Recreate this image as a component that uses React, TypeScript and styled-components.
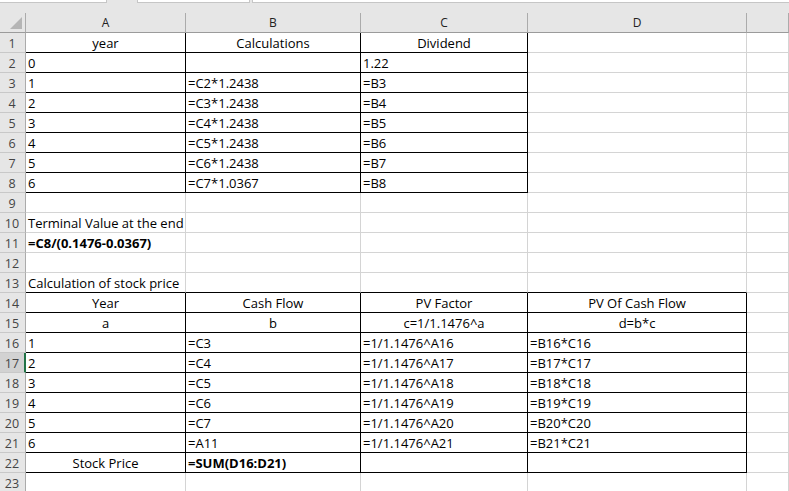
import React from "react";
import styled, { createGlobalStyle } from "styled-components";

const GlobalStyle = createGlobalStyle`
  html, body {
    margin: 0;
    padding: 0;
    background: #ffffff;
    overflow: hidden;
  }
  body {
    font-family: "Open Sans", "Liberation Sans", Arial, sans-serif;
  }
`;

const Window = styled.div`
  width: 789px;
  height: 491px;
  overflow: hidden;
  background: #e6e6e6;
`;

const TopStrip = styled.div`
  display: flex;
  align-items: flex-start;
  height: 13px;
`;

const FormulaBox = styled.div<{ $w?: number }>`
  height: 2px;
  background: #ffffff;
  border: 1px solid #c6c6c6;
  border-top: none;
  ${(p) => (p.$w ? `width: ${p.$w}px;` : "flex: 1;")}
  margin-right: 30px;
  &:first-child {
    border-left: none;
  }
  &:nth-child(2) {
    margin-right: 2px;
  }
  &:last-child {
    margin-right: 0;
    border-right: none;
  }
`;

const Sheet = styled.div`
  display: grid;
  grid-template-columns: 26px 160px 175px 167px 219px 1fr;
  grid-auto-rows: 20px;
`;

const Corner = styled.div`
  position: relative;
  background: #e6e6e6;
  border-right: 1px solid #ababab;
  border-bottom: 1px solid #9b9b9b;
  &::after {
    content: "";
    position: absolute;
    left: 10px;
    top: 4px;
    width: 0;
    height: 0;
    border-left: 12px solid transparent;
    border-bottom: 12px solid #b5b5b5;
  }
`;

const ColHead = styled.div`
  background: #e6e6e6;
  border-right: 1px solid #ababab;
  border-bottom: 1px solid #9b9b9b;
  font-size: 12px;
  line-height: 19px;
  color: #222;
  text-align: center;
`;

const RowHead = styled.div<{ $selected?: boolean }>`
  display: flex;
  align-items: flex-end;
  justify-content: center;
  background: ${(p) => (p.$selected ? "#d2d2d2" : "#e6e6e6")};
  border-right: ${(p) => (p.$selected ? "2px solid #217346" : "1px solid #ababab")};
  border-bottom: 1px solid #c8c8c8;
  font-size: 12.5px;
  line-height: 16px;
  color: #444;
  padding-right: ${(p) => (p.$selected ? "0" : "1px")};
`;

const Cell = styled.div<{
  $center?: boolean;
  $bold?: boolean;
  $right?: boolean;
  $bottom?: boolean;
}>`
  display: flex;
  align-items: flex-end;
  justify-content: ${(p) => (p.$center ? "center" : "flex-start")};
  background: #ffffff;
  border-right: 1px solid ${(p) => (p.$right ? "#000000" : "#d4d4d4")};
  border-bottom: 1px solid ${(p) => (p.$bottom ? "#000000" : "#d4d4d4")};
  padding: 0 2px 1px;
  font-size: 13px;
  line-height: 16px;
  font-weight: ${(p) => (p.$bold ? 700 : 400)};
  color: #000;
  white-space: nowrap;
  overflow: hidden;
`;

type CellDef = { t?: string; c?: boolean; b?: boolean };

const L = (t: string): CellDef => ({ t });
const C = (t: string): CellDef => ({ t, c: true });
const B = (t: string): CellDef => ({ t, b: true });
const E: CellDef = {};

const rows: CellDef[][] = [
  [C("year"), C("Calculations"), C("Dividend"), E],
  [L("0"), E, L("1.22"), E],
  [L("1"), L("=C2*1.2438"), L("=B3"), E],
  [L("2"), L("=C3*1.2438"), L("=B4"), E],
  [L("3"), L("=C4*1.2438"), L("=B5"), E],
  [L("4"), L("=C5*1.2438"), L("=B6"), E],
  [L("5"), L("=C6*1.2438"), L("=B7"), E],
  [L("6"), L("=C7*1.0367"), L("=B8"), E],
  [E, E, E, E],
  [L("Terminal Value at the end of year 6"), E, E, E],
  [B("=C8/(0.1476-0.0367)"), E, E, E],
  [E, E, E, E],
  [L("Calculation of stock price"), E, E, E],
  [C("Year"), C("Cash Flow"), C("PV Factor"), C("PV Of Cash Flow")],
  [C("a"), C("b"), C("c=1/1.1476^a"), C("d=b*c")],
  [L("1"), L("=C3"), L("=1/1.1476^A16"), L("=B16*C16")],
  [L("2"), L("=C4"), L("=1/1.1476^A17"), L("=B17*C17")],
  [L("3"), L("=C5"), L("=1/1.1476^A18"), L("=B18*C18")],
  [L("4"), L("=C6"), L("=1/1.1476^A19"), L("=B19*C19")],
  [L("5"), L("=C7"), L("=1/1.1476^A20"), L("=B20*C20")],
  [L("6"), L("=A11"), L("=1/1.1476^A21"), L("=B21*C21")],
  [C("Stock Price"), B("=SUM(D16:D21)"), E, E],
  [E, E, E, E],
];

const boxed = (r: number, c: number) =>
  (r >= 1 && r <= 8 && c <= 2) || (r >= 14 && r <= 22 && c <= 3);

const letters = ["A", "B", "C", "D", ""];

export default function App() {
  return (
    <>
      <GlobalStyle />
      <Window>
        <TopStrip>
          <FormulaBox $w={106} />
          <FormulaBox $w={111} />
          <FormulaBox />
        </TopStrip>
        <Sheet>
          <Corner />
          {letters.map((l, i) => (
            <ColHead key={i}>{l}</ColHead>
          ))}
          {rows.map((row, ri) => {
            const r = ri + 1;
            return (
              <React.Fragment key={r}>
                <RowHead $selected={r === 17}>{r}</RowHead>
                {row.map((cell, c) => (
                  <Cell
                    key={c}
                    $center={cell.c}
                    $bold={cell.b}
                    $right={boxed(r, c)}
                    $bottom={boxed(r, c) || (r === 13 && c <= 3)}
                  >
                    {cell.t}
                  </Cell>
                ))}
                <Cell />
              </React.Fragment>
            );
          })}
        </Sheet>
      </Window>
    </>
  );
}
